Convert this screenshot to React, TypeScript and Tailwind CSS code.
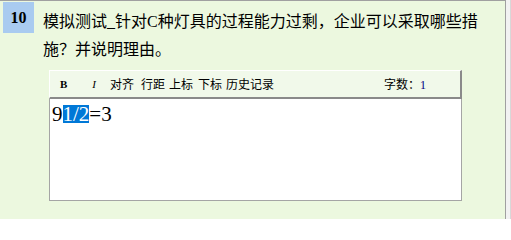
import React from 'react';

const cjk = { fontFamily: '"Liberation Serif", "Noto Sans CJK SC", serif' };

function Toolbar() {
  return (
    <div
      className="flex h-[29px] items-center border-t border-l border-white border-r-2 border-b-2 border-r-[#8a8a8a] border-b-[#8a8a8a] bg-[#f1f9ea] text-[12px] text-black"
      style={{ fontFamily: '"Noto Sans CJK SC", sans-serif' }}
    >
      <span className="ml-[10px] text-[11px] font-bold" style={{ fontFamily: '"Liberation Serif", serif' }}>B</span>
      <span className="ml-[25px] text-[11px] italic" style={{ fontFamily: '"Liberation Serif", serif' }}>I</span>
      <span className="ml-[14px]">对齐</span>
      <span className="ml-[7px]">行距</span>
      <span className="ml-[4px]">上标</span>
      <span className="ml-[5px]">下标</span>
      <span className="ml-[4px]">历史记录</span>
      <span className="ml-auto mr-[34px]">
        字数：<span className="text-[#000080]" style={{ fontFamily: '"Liberation Serif", serif' }}>1</span>
      </span>
    </div>
  );
}

function Editor() {
  return (
    <div className="h-[102px] border-x border-b border-[#a5a5a5] bg-white pt-[6px] pl-[2px]">
      <div className="text-[21px] leading-[18px] text-black" style={{ fontFamily: '"Liberation Serif", serif' }}>
        <span className="inline-block">9</span>
        <span className="inline-block bg-[#0078d7] text-white">1/2</span>
        <span className="inline-block">=3</span>
      </div>
    </div>
  );
}

export default function App() {
  return (
    <div className="flex h-[219px] w-[511px] overflow-hidden bg-[#f2f2f2]">
      <div className="flex flex-1 border-t border-r border-[#a0a0a0] bg-[#ecf8df]">
        <div className="ml-[3px] mt-[1px] flex h-[31px] w-[31px] shrink-0 items-center justify-center bg-[#a9cbf0]">
          <span className="text-[16px] font-bold text-black" style={{ fontFamily: '"Liberation Serif", serif' }}>10</span>
        </div>
        <div className="ml-[9px] flex flex-col pt-[7px]">
          <p className="w-[445px] text-[16px] leading-[28px] text-black" style={cjk}>
            模拟测试_针对C种灯具的过程能力过剩，企业可以采取哪些措施？并说明理由。
          </p>
          <div className="ml-[6px] mt-[6px] w-[413px]">
            <Toolbar />
            <Editor />
          </div>
        </div>
      </div>
      <div className="w-[5px] border-r border-[#d8d8d8]" />
    </div>
  );
}
